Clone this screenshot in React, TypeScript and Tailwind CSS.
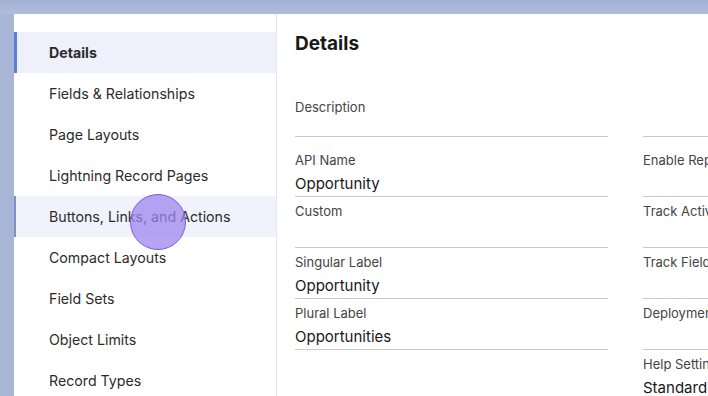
import React from 'react';

const navItems = [
  'Details',
  'Fields & Relationships',
  'Page Layouts',
  'Lightning Record Pages',
  'Buttons, Links, and Actions',
  'Compact Layouts',
  'Field Sets',
  'Object Limits',
  'Record Types',
];

type Field = { label: string; value?: string; extraTop?: boolean };

const leftFields: Field[] = [
  { label: 'API Name', value: 'Opportunity', extraTop: true },
  { label: 'Custom' },
  { label: 'Singular Label', value: 'Opportunity' },
  { label: 'Plural Label', value: 'Opportunities' },
];

const rightFields: Field[] = [
  { label: 'Enable Reports', extraTop: true },
  { label: 'Track Activities' },
  { label: 'Track Field History' },
  { label: 'Deployment Status' },
  { label: 'Help Settings', value: 'Standard salesforce.com Help Window' },
];

function FieldRow({ field, last }: { field: Field; last?: boolean }) {
  return (
    <div className={`${field.extraTop ? 'pt-[15px]' : 'pt-[6px]'} ${last ? '' : 'border-b border-[#c9c9c9]'}`}>
      <div className="h-4 text-[13px] leading-4 text-[#444]">{field.label}</div>
      <div className="mt-1 h-6 text-[15px] leading-6 text-[#181818] whitespace-nowrap">{field.value ?? ''}</div>
    </div>
  );
}

export default function App() {
  return (
    <div
      className="relative h-[396px] w-[708px] overflow-hidden bg-[#a8b5d7] pl-[14px] pt-[14px]"
      style={{ fontFamily: 'Inter, "Noto Sans", sans-serif' }}
    >
      <div className="absolute left-0 top-0 h-[14px] w-full bg-gradient-to-b from-[#a3b0d1] to-[#b0bcdc]" />

      <div className="flex h-full w-[760px] bg-white">
        {/* sidebar */}
        <div className="w-[263px] shrink-0 border-r border-[#e3e5ea] pt-[18px]">
          {navItems.map((item, i) => {
            const active = i === 0;
            const hover = i === 4;
            return (
              <div
                key={item}
                className={`flex h-[41px] items-center text-[14.2px] text-[#2b2b2b] ${
                  active
                    ? 'border-l-[3px] border-[#5b7fd8] bg-[#eef1fb] pl-[32px] font-bold text-[#1a1a1a]'
                    : hover
                    ? 'border-l-[2px] border-[#7d92c4] bg-[#f0f3fb] pl-[33px]'
                    : 'pl-[35px]'
                }`}
              >
                {item}
              </div>
            );
          })}
        </div>

        {/* content */}
        <div className="flex-1 pl-[18px] pt-[18px]">
          <h1 className="text-[19px] font-bold leading-6 text-[#181818]">Details</h1>
          <div className="mt-[43px] flex gap-[35px]">
            <div className="w-[313px] shrink-0">
              <div className="h-[38px] border-b border-[#c9c9c9]">
                <div className="h-4 text-[13px] leading-4 text-[#444]">Description</div>
              </div>
              {leftFields.map((f) => (
                <FieldRow key={f.label} field={f} />
              ))}
            </div>
            <div className="w-[313px] shrink-0">
              <div className="h-[38px] border-b border-[#c9c9c9]" />
              {rightFields.map((f, i) => (
                <FieldRow key={f.label} field={f} last={i === rightFields.length - 1} />
              ))}
            </div>
          </div>
        </div>
      </div>

      {/* cursor highlight */}
      <div className="absolute left-[130px] top-[194px] h-[56px] w-[56px] rounded-full border border-[#7a5ddc] bg-[#9f86ee]/75" />
    </div>
  );
}
